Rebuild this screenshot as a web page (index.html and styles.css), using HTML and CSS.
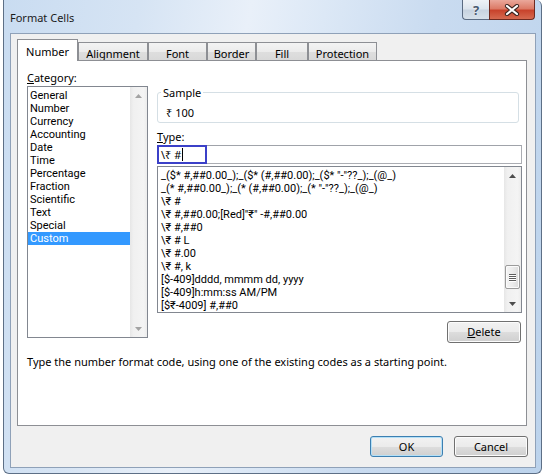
FILE: index.html
```html
<!DOCTYPE html>
<html>
<head>
<meta charset="utf-8">
<title>Format Cells</title>
<link rel="stylesheet" href="styles.css">
</head>
<body>
<div class="window">
  <div class="titlebar">
    <span class="title">Format Cells</span>
    <div class="caption">
      <div class="cap-btn help">?</div>
      <div class="cap-btn close">
        <svg width="16" height="12" viewBox="0 0 16 12"><path d="M3 2 L13 10 M13 2 L3 10" stroke="#3b2420" stroke-width="4.2" stroke-linecap="round" fill="none"/><path d="M3 2 L13 10 M13 2 L3 10" stroke="#ffffff" stroke-width="2.2" stroke-linecap="round" fill="none"/></svg>
      </div>
    </div>
  </div>
  <div class="client">
    <div class="tabs">
      <div class="tab active t-number">Number</div>
      <div class="tab t-align">Alignment</div>
      <div class="tab t-font">Font</div>
      <div class="tab t-border">Border</div>
      <div class="tab t-fill">Fill</div>
      <div class="tab t-prot">Protection</div>
    </div>
    <div class="panel">
      <div class="columns">
        <div class="cat-col">
          <div class="label"><u>C</u>ategory:</div>
          <div class="listbox cat-list">
            <ul class="items cat-items">
              <li>General</li>
              <li>Number</li>
              <li>Currency</li>
              <li>Accounting</li>
              <li>Date</li>
              <li>Time</li>
              <li>Percentage</li>
              <li>Fraction</li>
              <li>Scientific</li>
              <li>Text</li>
              <li>Special</li>
              <li class="selected">Custom</li>
            </ul>
            <div class="vscroll dim">
              <div class="sb-arrow"><svg width="7" height="4" viewBox="0 0 7 4"><path d="M0 4 L3.5 0 L7 4 Z"/></svg></div>
              <div class="sb-track"></div>
              <div class="sb-arrow"><svg width="7" height="4" viewBox="0 0 7 4"><path d="M0 0 L3.5 4 L7 0 Z"/></svg></div>
            </div>
          </div>
        </div>
        <div class="right-col">
          <fieldset class="sample">
            <legend>Sample</legend>
            <div class="sample-val">₹ 100</div>
          </fieldset>
          <div class="label type-label"><u>T</u>ype:</div>
          <div class="type-input">
            <span class="type-text">\₹ #</span><span class="caret"></span>
            <div class="focus-mark"></div>
          </div>
          <div class="listbox fmt-list">
            <ul class="items fmt-items">
              <li>_($* #,##0.00_);_($* (#,##0.00);_($* "-"??_);_(@_)</li>
              <li>_(* #,##0.00_);_(* (#,##0.00);_(* "-"??_);_(@_)</li>
              <li>\₹ #</li>
              <li>\₹ #,##0.00;[Red]"₹" -#,##0.00</li>
              <li>\₹ #,##0</li>
              <li>\₹ # L</li>
              <li>\₹ #.00</li>
              <li>\₹ #, k</li>
              <li>[$-409]dddd, mmmm dd, yyyy</li>
              <li>[$-409]h:mm:ss AM/PM</li>
              <li>[$₹-4009] #,##0</li>
            </ul>
            <div class="vscroll">
              <div class="sb-arrow"><svg width="7" height="4" viewBox="0 0 7 4"><path d="M0 4 L3.5 0 L7 4 Z"/></svg></div>
              <div class="sb-track">
                <div class="sb-thumb"><span></span><span></span><span></span><span></span></div>
              </div>
              <div class="sb-arrow"><svg width="7" height="4" viewBox="0 0 7 4"><path d="M0 0 L3.5 4 L7 0 Z"/></svg></div>
            </div>
          </div>
          <button class="btn delete"><u>D</u>elete</button>
        </div>
      </div>
      <p class="hint">Type the number format code, using one of the existing codes as a starting point.</p>
    </div>
    <div class="footer">
      <button class="btn ok">OK</button>
      <button class="btn cancel">Cancel</button>
    </div>
  </div>
</div>
</body>
</html>
```
FILE: styles.css
```css
* { box-sizing: border-box; }

html, body {
  margin: 0;
  padding: 0;
}

body {
  width: 544px;
  height: 476px;
  overflow: hidden;
  background: #ffffff;
  font-family: "Noto Sans", "Open Sans", "DejaVu Sans", sans-serif;
  font-size: 11px;
  color: #000;
}

.window {
  margin-left: 3px;
  width: 539px;
  height: 474px;
  border: 1px solid #5d6f86;
  border-top: none;
  border-radius: 0 6px 6px 6px;
  padding: 0 5px 5px 6px;
  display: flex;
  flex-direction: column;
  background: linear-gradient(100deg, #c9dcf1 0%, #d6e4f4 22%, #e9f0f9 40%, #dce8f6 52%, #c9dbf0 70%, #bcd3ec 100%);
}

/* ---------- title bar ---------- */
.titlebar {
  height: 33px;
  flex: none;
  display: flex;
  align-items: flex-start;
}

.title {
  margin-top: 10px;
  line-height: 16px;
  font-size: 11px;
  color: #1b1b1b;
}

.caption {
  margin-left: auto;
  margin-right: 1px;
  display: flex;
}

.cap-btn {
  height: 20px;
  display: flex;
  align-items: center;
  justify-content: center;
  border: 1px solid #5a6b82;
  border-top: none;
}

.help {
  width: 27px;
  border-radius: 0 0 0 4px;
  border-right: none;
  background: linear-gradient(#eef2f7 0%, #dde5ee 45%, #c7d3e0 55%, #d6e0ea 100%);
  color: #485a70;
  font-weight: bold;
  font-size: 13px;
  text-shadow: 0 0 2px #ffffff;
}

.close {
  width: 46px;
  border-radius: 0 0 4px 0;
  border-color: #6e2a20;
  background: linear-gradient(#eaa89b 0%, #dc7b67 45%, #c8432c 55%, #d56a50 100%);
}

/* ---------- client ---------- */
.client {
  flex: 1;
  background: #f0f0f0;
  border: 1px solid #8fa1b8;
  padding: 6px 8px 0 6px;
  display: flex;
  flex-direction: column;
}

.tabs {
  display: flex;
  align-items: flex-end;
  height: 21px;
  flex: none;
  margin-bottom: -1px;
}

.tab {
  height: 19px;
  border: 1px solid #8d8f94;
  border-bottom: none;
  background: linear-gradient(#f3f3f3 0%, #ebebeb 50%, #dedede 51%, #d8d8d8 100%);
  display: flex;
  align-items: center;
  justify-content: center;
  padding-top: 3px;
  color: #000;
}

.tab.active {
  height: 22px;
  background: #ffffff;
  position: relative;
  z-index: 1;
  padding-top: 2px;
}

.t-number { width: 61px; }
.t-align { width: 70px; }
.t-font { width: 59px; }
.t-border { width: 49px; }
.t-fill { width: 52px; }
.t-prot { width: 69px; }

.panel {
  flex: none;
  height: 366px;
  background: #ffffff;
  border: 1px solid #8d8f94;
  padding: 10px 4px 0 9px;
  display: flex;
  flex-direction: column;
}

.columns {
  display: flex;
  gap: 9px;
}

.label {
  line-height: 14px;
  height: 14px;
}

.cat-col {
  width: 121px;
  display: flex;
  flex-direction: column;
}

.listbox {
  border: 1px solid #828790;
  background: #ffffff;
  display: flex;
  overflow: hidden;
}

.items {
  list-style: none;
  margin: 0;
  flex: 1;
}

.cat-items,
.fmt-items {
  font-family: Roboto, "Noto Sans", sans-serif;
  font-size: 11px;
}

.cat-list {
  margin-top: 1px;
  height: 252px;
}

.cat-items {
  padding: 2px 0 0 0;
}

.cat-items li {
  height: 13px;
  line-height: 13px;
  padding-left: 2px;
  white-space: nowrap;
}

.cat-items li.selected {
  background: #3399ff;
  color: #ffffff;
}

/* ---------- scrollbars ---------- */
.vscroll {
  width: 17px;
  flex: none;
  display: flex;
  flex-direction: column;
  background: linear-gradient(90deg, #e6e6e6 0%, #f0f0f0 20%, #f4f4f4 80%, #ececec 100%);
}

.sb-arrow {
  height: 17px;
  flex: none;
  display: flex;
  align-items: center;
  justify-content: center;
}

.sb-arrow svg { fill: #4d4d4d; }

.vscroll.dim .sb-arrow svg { fill: #a3a3a3; }

.sb-track {
  flex: 1;
  display: flex;
  flex-direction: column;
  justify-content: flex-end;
  padding: 0 1px;
}

.sb-thumb {
  height: 24px;
  margin-bottom: 6px;
  border: 1px solid #9b9b9b;
  border-radius: 2px;
  background: linear-gradient(90deg, #f4f4f4 0%, #ececec 50%, #dcdcdc 100%);
  box-shadow: inset 0 0 0 1px #fbfbfb;
  display: flex;
  flex-direction: column;
  align-items: center;
  justify-content: center;
  gap: 1px;
}

.sb-thumb span {
  width: 7px;
  height: 1px;
  background: #5e5e5e;
  box-shadow: 0 1px 0 #ffffff;
}

/* ---------- right column ---------- */
.right-col {
  width: 365px;
  display: flex;
  flex-direction: column;
}

.sample {
  margin: 15px 0 0 0;
  width: 362px;
  border: 1px solid #d5dfe5;
  border-radius: 3px;
  padding: 0 8px 2px 8px;
}

.sample legend {
  margin-left: -5px;
  padding: 0 2px;
  line-height: 13px;
}

.sample-val {
  line-height: 14px;
  margin-top: 7px;
}

.type-label {
  margin-top: 7px;
}

.type-input {
  margin-top: 1px;
  height: 19px;
  width: 365px;
  border: 1px solid #abadb3;
  border-top-color: #a0a3aa;
  background: #ffffff;
  display: flex;
  align-items: center;
  padding-left: 3px;
  position: relative;
}

.type-text { line-height: 14px; }

.caret {
  width: 1px;
  height: 13px;
  background: #000;
  margin-left: 1px;
}

.focus-mark {
  position: absolute;
  left: -1px;
  top: -1px;
  width: 50px;
  height: 19px;
  border: 2px solid #3b40c8;
}

.fmt-list {
  margin-top: 2px;
  height: 147px;
}

.fmt-items {
  padding: 2px 0 0 3px;
}

.fmt-items li {
  height: 13px;
  line-height: 13px;
  white-space: nowrap;
}

/* ---------- buttons ---------- */
.btn {
  font-family: inherit;
  font-size: 11px;
  color: #000;
  border: 1px solid #707070;
  border-radius: 3px;
  background: linear-gradient(#f2f2f2 0%, #ebebeb 50%, #dddddd 51%, #cfcfcf 100%);
  box-shadow: inset 0 0 0 1px #fcfcfc;
  padding: 0;
  margin: 0;
  line-height: 14px;
}

.delete {
  align-self: flex-end;
  margin-top: 8px;
  margin-right: 1px;
  width: 74px;
  height: 22px;
}

.hint {
  margin: 12px 0 0 0;
  line-height: 14px;
}

.footer {
  display: flex;
  justify-content: flex-end;
  gap: 11px;
  margin-top: 10px;
}

.footer .btn {
  height: 21px;
}

.ok {
  width: 73px;
  border-color: #3c7fb1;
  box-shadow: inset 0 0 0 1px #b4e0f7;
}

.cancel {
  width: 74px;
  margin-right: -1px;
}
```
